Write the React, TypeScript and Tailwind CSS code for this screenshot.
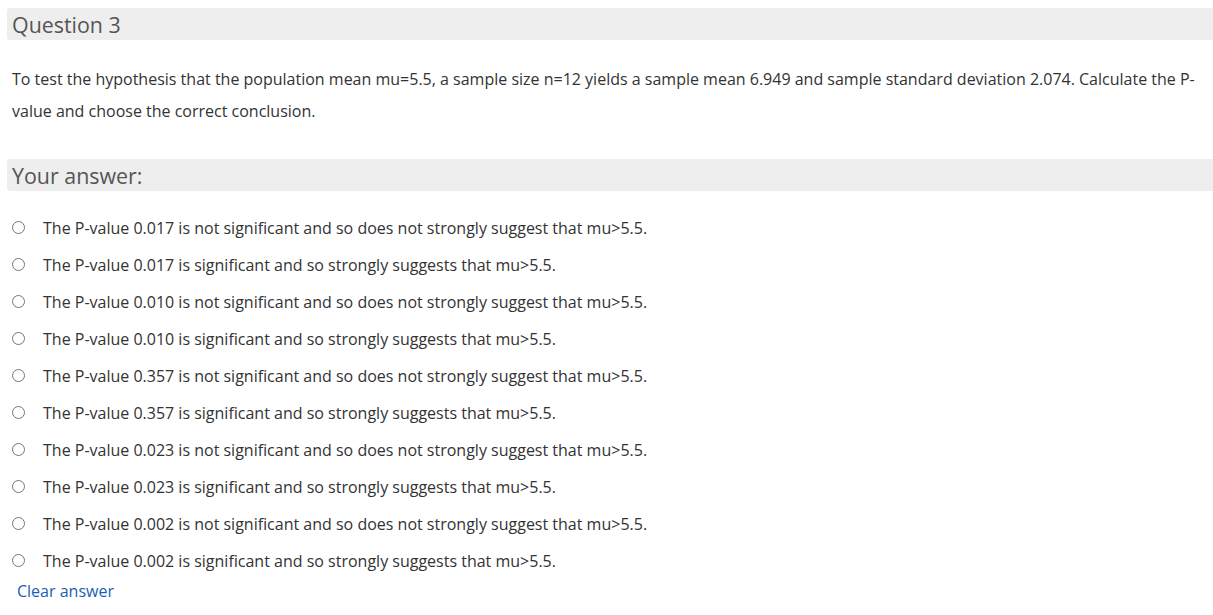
const options = [
  'The P-value 0.017 is not significant and so does not strongly suggest that mu>5.5.',
  'The P-value 0.017 is significant and so strongly suggests that mu>5.5.',
  'The P-value 0.010 is not significant and so does not strongly suggest that mu>5.5.',
  'The P-value 0.010 is significant and so strongly suggests that mu>5.5.',
  'The P-value 0.357 is not significant and so does not strongly suggest that mu>5.5.',
  'The P-value 0.357 is significant and so strongly suggests that mu>5.5.',
  'The P-value 0.023 is not significant and so does not strongly suggest that mu>5.5.',
  'The P-value 0.023 is significant and so strongly suggests that mu>5.5.',
  'The P-value 0.002 is not significant and so does not strongly suggest that mu>5.5.',
  'The P-value 0.002 is significant and so strongly suggests that mu>5.5.',
];

export default function App() {
  return (
    <div className="w-[1213px] h-[615px] overflow-hidden bg-white font-['Open_Sans',sans-serif] text-[#333]">
      <div className="pt-2 pl-[7px]">
        <div className="h-8 pt-[2px] bg-[#eeeeee] rounded-l-[3px] pl-[5px] flex items-center text-[21.4px] text-[#555]">
          Question 3
        </div>
      </div>
      <p className="mt-[23px] pl-3 pr-2 text-[16px] leading-[32px]">
        To test the hypothesis that the population mean mu=5.5, a sample size n=12 yields a sample mean 6.949 and sample standard deviation 2.074. Calculate the P-value and choose the correct conclusion.
      </p>
      <div className="mt-[32px] pl-[7px]">
        <div className="h-8 pt-[2px] bg-[#eeeeee] rounded-l-[3px] pl-[5px] flex items-center text-[21.4px] text-[#555]">
          Your answer:
        </div>
      </div>
      <div className="mt-[18px] flex flex-col">
        {options.map((o) => (
          <label key={o} className="h-[37px] flex items-center text-[16px]">
            <span className="ml-3 w-[13px] h-[13px] rounded-full border border-[#767676] bg-white" />
            <span className="ml-[18px]">{o}</span>
          </label>
        ))}
      </div>
      <div className="pl-[17px] text-[16px] leading-[24px] text-[#1a5eb3]">Clear answer</div>
    </div>
  );
}
